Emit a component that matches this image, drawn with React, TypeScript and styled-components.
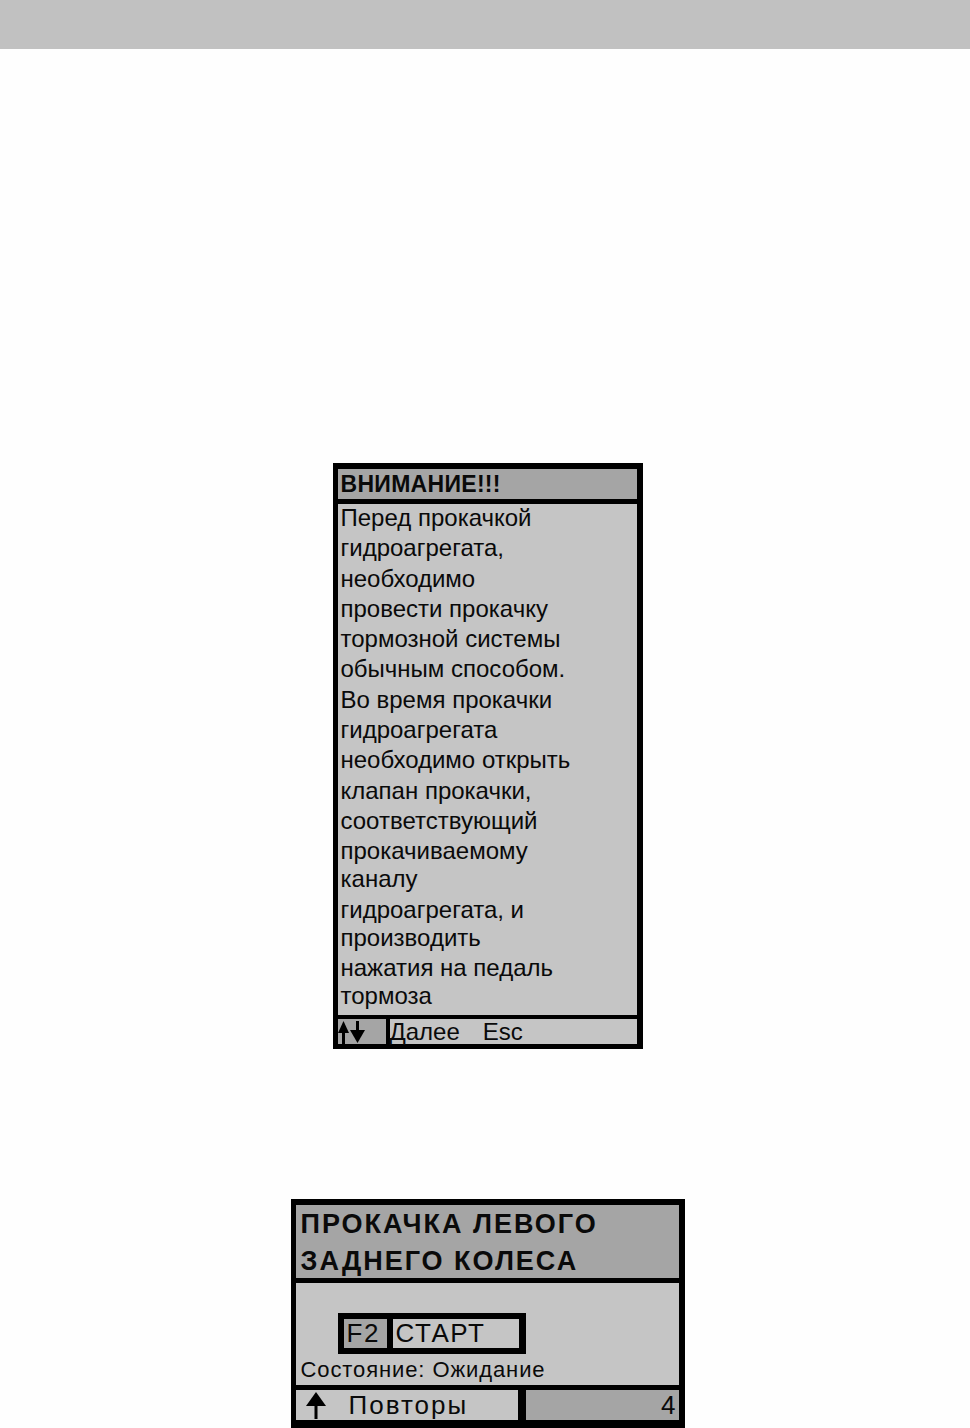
import styled, { createGlobalStyle } from "styled-components"

const GlobalStyle = createGlobalStyle`
    html, body {
        margin: 0;
        padding: 0;
        background: #fefefe;
    }
    body {
        font-family: "Liberation Sans", Arial, sans-serif;
        color: #0a0a0a;
    }
`

const LIGHT = "#c5c5c5"
const DARK = "#a5a5a5"

type Paragraph = string[]

const warningText: Paragraph[] = [
    ["Перед прокачкой"],
    ["гидроагрегата,"],
    ["необходимо"],
    ["провести прокачку"],
    ["тормозной системы"],
    ["обычным способом."],
    ["Во время прокачки"],
    ["гидроагрегата"],
    ["необходимо открыть"],
    ["клапан прокачки,"],
    ["соответствующий"],
    ["прокачиваемому", "каналу"],
    ["гидроагрегата, и", "производить"],
    ["нажатия на педаль", "тормоза"]
]

const UpArrow = ({ w = 11, h = 23 }: { w?: number; h?: number }) => (
    <svg width={w} height={h} viewBox={`0 0 ${w} ${h}`}>
        <polygon points={`${w / 2},0 ${w},${h * 0.52} 0,${h * 0.52}`} fill="#000" />
        <rect x={w / 2 - 1.5} y={h * 0.45} width="3" height={h * 0.55} fill="#000" />
    </svg>
)

const DownArrow = () => (
    <svg width="15" height="23" viewBox="0 0 15 23">
        <rect x="6" y="0" width="3" height="10" fill="#000" />
        <polygon points="0,9 15,9 7.5,22" fill="#000" />
    </svg>
)

export default function App() {
    return (
        <>
            <GlobalStyle />
            <Page>
                <TopBar />
                <Screen>
                    <WarningFrame>
                        <WarningTitle>ВНИМАНИЕ!!!</WarningTitle>
                        <WarningBody>
                            {warningText.map((p, i) => (
                                <Para key={`p-${i}`}>
                                    {p.map((line) => (
                                        <div key={line}>{line}</div>
                                    ))}
                                </Para>
                            ))}
                        </WarningBody>
                        <WarningFooter>
                            <ArrowCell>
                                <UpArrow />
                                <DownArrow />
                            </ArrowCell>
                            <FooterHint>
                                Далее<Gap />Esc
                            </FooterHint>
                        </WarningFooter>
                    </WarningFrame>
                </Screen>
                <Screen $top={150}>
                    <BleedFrame>
                        <BleedTitle>
                            ПРОКАЧКА ЛЕВОГО
                            <br />
                            ЗАДНЕГО КОЛЕСА
                        </BleedTitle>
                        <BleedBody>
                            <StartButton>
                                <KeyCell>F2</KeyCell>
                                <ActionCell>СТАРТ</ActionCell>
                            </StartButton>
                            <Status>Состояние: Ожидание</Status>
                        </BleedBody>
                        <BleedFooter>
                            <RepeatCell>
                                <UpArrow w={20} h={27} />
                                <span>Повторы</span>
                            </RepeatCell>
                            <CountCell>4</CountCell>
                        </BleedFooter>
                    </BleedFrame>
                </Screen>
            </Page>
        </>
    )
}

const Page = styled.div`
    width: 970px;
    height: 1428px;
    overflow: hidden;
    display: flex;
    flex-direction: column;
`

const TopBar = styled.div`
    height: 49px;
    background: #c1c1c1;
`

const Screen = styled.div<{ $top?: number }>`
    display: flex;
    justify-content: center;
    padding-left: 5px;
    margin-top: ${({ $top }) => $top ?? 414}px;
`

const WarningFrame = styled.div`
    width: 299px;
    border: 5px solid #000;
    border-top-width: 6px;
    border-right-width: 6px;
    background: #000;
    display: flex;
    flex-direction: column;
    gap: 5px;
`

const WarningTitle = styled.div`
    height: 30px;
    line-height: 31px;
    background: ${DARK};
    padding-left: 3px;
    font-size: 23px;
    font-weight: bold;
    letter-spacing: 0.3px;
`

const WarningBody = styled.div`
    height: 511px;
    background: ${LIGHT};
    padding: 0 0 0 3px;
    box-sizing: border-box;
    font-size: 24px;
    display: flex;
    flex-direction: column;
    gap: 2.3px;
`

const Para = styled.div`
    line-height: 28px;
`

const WarningFooter = styled.div`
    height: 25px;
    display: flex;
    gap: 4px;
    margin-top: -1px;
`

const ArrowCell = styled.div`
    width: 48px;
    background: ${DARK};
    display: flex;
    align-items: center;
    gap: 1px;
    padding-top: 1px;
`

const FooterHint = styled.div`
    flex: 1;
    background: ${LIGHT};
    font-size: 24px;
    line-height: 25px;
    white-space: pre;
`

const Gap = styled.span`
    display: inline-block;
    width: 23px;
`

const BleedFrame = styled.div`
    width: 383px;
    border: 5px solid #000;
    border-top-width: 6px;
    border-right-width: 6px;
    border-bottom-width: 8px;
    background: #000;
    display: flex;
    flex-direction: column;
    gap: 5px;
`

const BleedTitle = styled.div`
    height: 73px;
    background: ${DARK};
    padding: 1px 0 0 5px;
    box-sizing: border-box;
    font-size: 27px;
    font-weight: bold;
    line-height: 37px;
    letter-spacing: 2px;
`

const BleedBody = styled.div`
    height: 102px;
    background: ${LIGHT};
    padding: 30px 0 0 5px;
    box-sizing: border-box;
    display: flex;
    flex-direction: column;
    align-items: flex-start;
`

const StartButton = styled.div`
    margin-left: 37px;
    width: 188px;
    height: 41px;
    box-sizing: border-box;
    border: 6px solid #000;
    border-right-width: 7px;
    background: #000;
    display: flex;
    gap: 6px;
    font-size: 26px;
    line-height: 29px;
    letter-spacing: 1.5px;
`

const KeyCell = styled.div`
    width: 43px;
    background: ${DARK};
    padding-left: 3px;
    box-sizing: border-box;
`

const ActionCell = styled.div`
    flex: 1;
    background: ${LIGHT};
    padding-left: 3px;
`

const Status = styled.div`
    font-size: 22px;
    letter-spacing: 0.9px;
    line-height: 31px;
`

const BleedFooter = styled.div`
    height: 30px;
    display: flex;
    gap: 8px;
`

const RepeatCell = styled.div`
    width: 222px;
    background: ${LIGHT};
    display: flex;
    align-items: center;
    gap: 23px;
    padding-left: 10px;
    box-sizing: border-box;
    font-size: 26px;
    letter-spacing: 2px;
    line-height: 30px;
`

const CountCell = styled.div`
    flex: 1;
    background: ${DARK};
    text-align: right;
    padding-right: 3px;
    font-size: 26px;
    line-height: 30px;
`
